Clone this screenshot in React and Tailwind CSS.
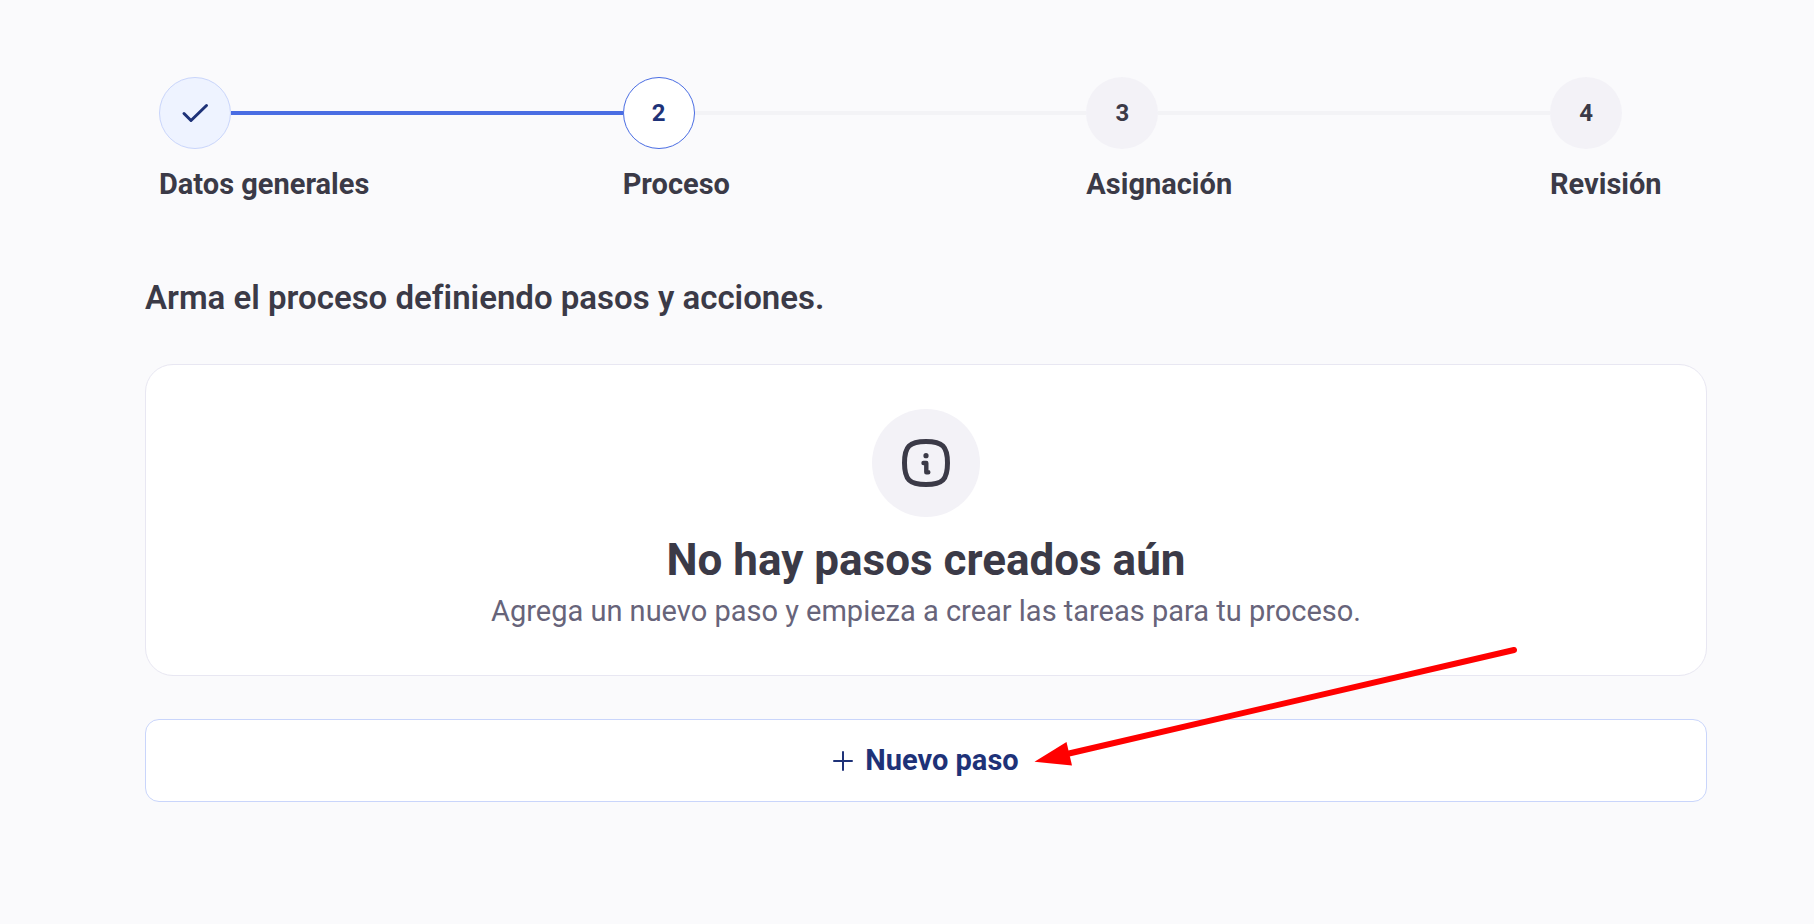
const STEPS = [
  { id: 1, label: 'Datos generales', status: 'done' },
  { id: 2, label: 'Proceso', status: 'current' },
  { id: 3, label: 'Asignación', status: 'pending' },
  { id: 4, label: 'Revisión', status: 'pending' },
];

const CIRCLE_STYLES = {
  done: 'border border-[#c9d5fb] bg-[#eef3ff] text-[#1e3278]',
  current: 'border border-[#4a6de3] bg-white text-[#1e3278]',
  pending: 'bg-[#f3f2f7] text-[#3b3a47]',
};

function CheckIcon() {
  return (
    <svg width="28" height="20" viewBox="0 0 28 20" fill="none" aria-label="Completado">
      <path d="M3 10.5 10 17.5 25.5 2.5" stroke="currentColor" strokeWidth="3" strokeLinecap="round" strokeLinejoin="round" />
    </svg>
  );
}

function InfoIcon() {
  return (
    <svg width="48" height="48" viewBox="0 0 48 48" fill="none" aria-hidden="true">
      <path
        d="M2.5 24C2.5 7.5 7.5 2.5 24 2.5S45.5 7.5 45.5 24 40.5 45.5 24 45.5 2.5 40.5 2.5 24Z"
        stroke="currentColor"
        strokeWidth="5"
      />
      <circle cx="24" cy="16.7" r="2.6" fill="currentColor" />
      <path d="M21.500 24H24.300V33.200H26.300" stroke="currentColor" strokeWidth="4.4" strokeLinecap="round" strokeLinejoin="round" />
    </svg>
  );
}

function PlusIcon() {
  return (
    <svg width="20" height="20" viewBox="0 0 20 20" fill="none" aria-hidden="true">
      <path d="M10 1V19M1 10H19" stroke="currentColor" strokeWidth="2" strokeLinecap="round" />
    </svg>
  );
}

function Arrow() {
  return (
    <svg className="pointer-events-none absolute left-1/2 bottom-9 ml-27" width="484" height="120" viewBox="0 0 484 120" fill="none" aria-hidden="true">
      <path d="M480 4 35 107.5" stroke="#ff0000" strokeWidth="6" strokeLinecap="round" />
      <path d="M0.5 115.8 32.5 96 38 119.5Z" fill="#ff0000" />
    </svg>
  );
}

function Step({ step, isLast }) {
  return (
    <li className={isLast ? 'w-[143px]' : 'flex-1'} aria-current={step.status === 'current' ? 'step' : undefined}>
      <div className="flex items-center">
        <span className={`flex size-18 shrink-0 items-center justify-center rounded-full text-2xl font-bold ${CIRCLE_STYLES[step.status]}`}>
          {step.status === 'done' ? <CheckIcon /> : step.id}
        </span>
        {!isLast && <span className={`h-1 flex-1 ${step.status === 'done' ? 'bg-[#4a6de3]' : 'bg-[#f3f3f6]'}`} />}
      </div>
      <p className="mt-4 whitespace-nowrap text-[29px] leading-[38px] font-bold">{step.label}</p>
    </li>
  );
}

export default function App() {
  return (
    <div className="min-h-screen bg-[#fafafc] pt-[77px] pr-[107px] pb-16 pl-[145px] font-['Roboto',sans-serif] text-[#3b3a47] [font-variant-ligatures:none]">
      <ol className="flex px-3.5">
        {STEPS.map((step, i) => (
          <Step key={step.id} step={step} isLast={i === STEPS.length - 1} />
        ))}
      </ol>

      <h1 className="mt-[71px] text-[33px] leading-12 font-semibold">Arma el proceso definiendo pasos y acciones.</h1>

      <div className="relative mt-[42px]">
        {/* Empty state */}
        <section className="flex flex-col items-center rounded-[28px] border border-[#e8e7f2] bg-white pt-11 pb-[42px]">
          <div className="flex size-27 items-center justify-center rounded-full bg-[#f3f2f7]">
            <InfoIcon />
          </div>
          <h2 className="mt-[15px] text-[44px] leading-14 font-bold">No hay pasos creados aún</h2>
          <p className="mt-px text-[29px] leading-11 text-[#67647a]">
            Agrega un nuevo paso y empieza a crear las tareas para tu proceso.
          </p>
        </section>

        <button
          type="button"
          className="mt-[43px] flex h-[83px] w-full items-center justify-center gap-3 rounded-[14px] border border-[#c9d5fb] bg-white text-[29px] font-bold text-[#1e3278]"
        >
          <PlusIcon />
          Nuevo paso
        </button>

        <Arrow />
      </div>
    </div>
  );
}
